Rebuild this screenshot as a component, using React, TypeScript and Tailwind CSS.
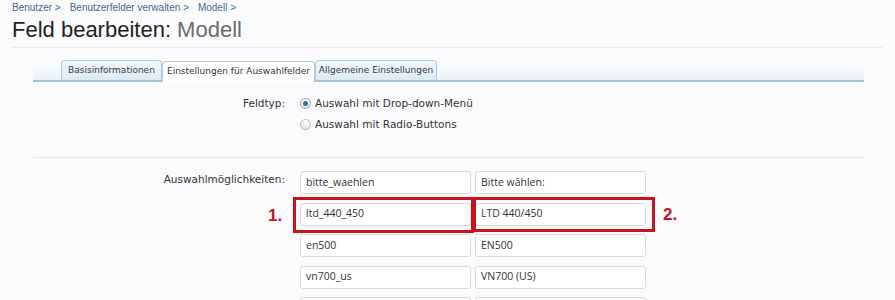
import React from "react";

const rows = [
  ["bitte_waehlen", "Bitte wählen:"],
  ["ltd_440_450", "LTD 440/450"],
  ["en500", "EN500"],
  ["vn700_us", "VN700 (US)"],
  ["", ""],
];

function Field({ value }: { value: string }) {
  return (
    <div className="w-[171px] h-[23px] shrink-0 bg-white border border-[#d6dbe0] rounded-[3px] px-[5px] flex items-center text-[10.5px] text-[#333] font-['Open_Sans',sans-serif]">
      {value}
    </div>
  );
}

export default function App() {
  return (
    <div className="w-[895px] h-[300px] overflow-hidden bg-[#fbfbfe] font-['DejaVu_Sans',sans-serif] text-[#333]">
      {/* Header */}
      <div className="pl-[12px] pr-[12px] pt-[1px]">
        <div className="flex gap-[9px] text-[10px] text-[#45688e] h-[12px] items-center font-['Liberation_Sans',sans-serif]">
          <span>Benutzer &gt;</span>
          <span>Benutzerfelder verwalten &gt;</span>
          <span>Modell &gt;</span>
        </div>
        <h1 className="mt-[5px] text-[22px] leading-[24px] font-['Liberation_Sans',sans-serif] text-[#222] pb-[5px] border-b border-[#e8ecf1]">
          Feld bearbeiten: <span className="text-[#6b6b6b]">Modell</span>
        </h1>
      </div>

      {/* Form */}
      <div className="ml-[33px] w-[831px] mt-[14px]">
        <div className="h-[20px] flex items-end pl-[28px] bg-gradient-to-b from-[#fbfcfe] to-[#e9f3f8] border-b-2 border-[#aac2d4] text-[9px]">
          <div className="h-[20px] flex items-center bg-gradient-to-b from-[#f2f7fb] to-[#dde9f2] border border-b-0 border-[#b3cbdc] rounded-t-[4px] text-[#3b3b3b] w-[101px] justify-center">
            Basisinformationen
          </div>
          <div className="h-[21px] -mb-[2px] flex items-center bg-white border border-b-0 border-[#b3cbdc] rounded-t-[4px] text-[#333] w-[153px] justify-center">
            Einstellungen für Auswahlfelder
          </div>
          <div className="h-[20px] flex items-center bg-gradient-to-b from-[#f2f7fb] to-[#dde9f2] border border-b-0 border-[#b3cbdc] rounded-t-[4px] text-[#3b3b3b] w-[122px] justify-center">
            Allgemeine Einstellungen
          </div>
        </div>

        {/* Feldtyp */}
        <div className="flex pt-[13px] pb-[25px] border-b border-[#e3e9ef] text-[10.5px]">
          <div className="w-[252px] text-right leading-[16px]">Feldtyp:</div>
          <div className="ml-[15px] flex flex-col gap-[5px]">
            <label className="flex items-center gap-[4px] leading-[16px]">
              <span className="w-[11px] h-[11px] rounded-full border border-[#9aa5b1] bg-gradient-to-b from-white to-[#dfe4ea] flex items-center justify-center">
                <span className="w-[5px] h-[5px] rounded-full bg-[#3b6f96]" />
              </span>
              Auswahl mit Drop-down-Menü
            </label>
            <label className="flex items-center gap-[4px] leading-[16px]">
              <span className="w-[11px] h-[11px] rounded-full border border-[#b0b8c1] bg-gradient-to-b from-white to-[#dfe4ea]" />
              Auswahl mit Radio-Buttons
            </label>
          </div>
        </div>

        {/* Auswahlmöglichkeiten */}
        <div className="flex pt-[13px] text-[10.5px]">
          <div className="w-[252px] text-right leading-[16px]">Auswahlmöglichkeiten:</div>
          <div className="ml-[15px] flex flex-col gap-[8.5px]">
            {rows.map(([a, b], i) => (
              <div key={i} className="relative flex gap-[4px]">
                <Field value={a} />
                <Field value={b} />
                {i === 1 && (
                  <>
                    <div className="absolute -left-[7px] -top-[6px] w-[181px] h-[36px] border-[3px] border-[#c8121f]" />
                    <div className="absolute left-[173px] -top-[6px] w-[182px] h-[35px] border-[3px] border-[#c8121f]" />
                    <span className="absolute -left-[32px] top-[0px] text-[17px] font-bold text-[#c8121f] font-['Liberation_Sans',sans-serif]">1.</span>
                    <span className="absolute left-[363px] -top-[1px] text-[17px] font-bold text-[#c8121f] font-['Liberation_Sans',sans-serif]">2.</span>
                  </>
                )}
              </div>
            ))}
          </div>
        </div>
      </div>
    </div>
  );
}
